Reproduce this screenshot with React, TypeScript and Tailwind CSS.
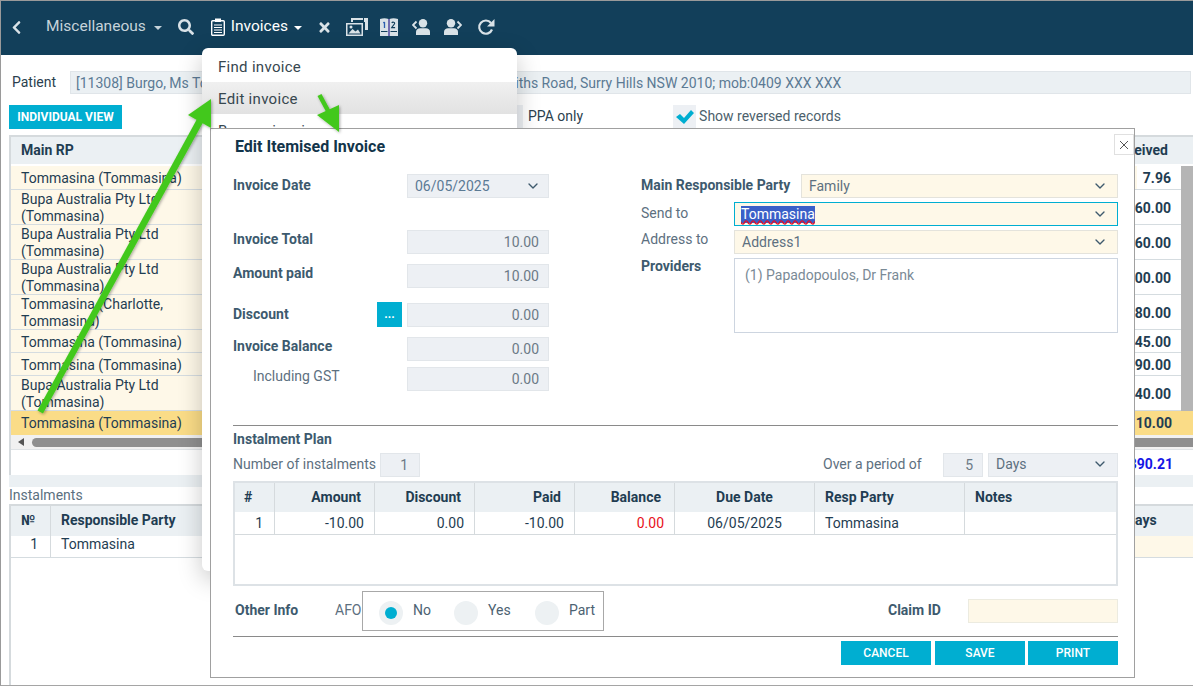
import { FaChevronLeft, FaSearch, FaTimes } from "react-icons/fa";
import { FiChevronDown } from "react-icons/fi";

const mainRows = [
  { name: ["Tommasina (Tommasina)"], value: "7.96", h: "h-[24px]", pt: "pt-[1px]", valuePt: "pt-[1px]" },
  { name: ["Bupa Australia Pty Ltd", "(Tommasina)"], value: "160.00", h: "h-[35px]", pt: "pt-[1px]", valuePt: "pt-[3px]" },
  { name: ["Bupa Australia Pty Ltd", "(Tommasina)"], value: "160.00", h: "h-[35px]", pt: "pt-[1px]", valuePt: "pt-[3px]" },
  { name: ["Bupa Australia Pty Ltd", "(Tommasina)"], value: "100.00", h: "h-[35px]", pt: "pt-[1px]", valuePt: "pt-[3px]" },
  { name: ["Tommasina (Charlotte,", "Tommasina)"], value: "180.00", h: "h-[35px]", pt: "pt-[1px]", valuePt: "pt-[3px]" },
  { name: ["Tommasina (Tommasina)"], value: "145.00", h: "h-[23px]", pt: "pt-[3px]", valuePt: "pt-[3px]" },
  { name: ["Tommasina (Tommasina)"], value: "190.00", h: "h-[23px]", pt: "pt-[3px]", valuePt: "pt-[3px]" },
  { name: ["Bupa Australia Pty Ltd", "(Tommasina)"], value: "140.00", h: "h-[35px]", pt: "pt-[1px]", valuePt: "pt-[3px]" },
];

const planCols = [
  { label: "#", w: "w-[40px]", head: "pl-[9px] text-left", cell: "pr-[11px] text-right", value: "1" },
  { label: "Amount", w: "w-[100px]", head: "pr-[13px] text-right", cell: "pr-[10px] text-right", value: "-10.00" },
  { label: "Discount", w: "w-[100px]", head: "pr-[13px] text-right", cell: "pr-[10px] text-right", value: "0.00" },
  { label: "Paid", w: "w-[100px]", head: "pr-[13px] text-right", cell: "pr-[10px] text-right", value: "-10.00" },
  { label: "Balance", w: "w-[100px]", head: "pr-[13px] text-right", cell: "pr-[10px] text-right text-[#e8101a]", value: "0.00" },
  { label: "Due Date", w: "w-[140px]", head: "text-center", cell: "text-center", value: "06/05/2025" },
  { label: "Resp Party", w: "w-[150px]", head: "pl-[10px] text-left", cell: "pl-[10px] text-left", value: "Tommasina" },
  { label: "Notes", w: "flex-1", head: "pl-[10px] text-left border-r-0", cell: "pl-[10px] border-r-0", value: "" },
];

function ImagesIcon() {
  return (
    <svg width="22" height="18" viewBox="0 0 22 18" fill="#d9e2e7">
      <path d="M5 0h12v2H7v2H5zM18 0h4v12h-3V4h-1zM19.500 1.500h1v1h-1zM19.500 4.500h1v1h-1z" />
      <path d="M0 5h17v13H0zM1.500 6.500v10h14v-10z" fillRule="evenodd" />
      <path d="M2.500 15.500l4-4.500 3 2.500 2.500-2 2.500 4z" />
      <circle cx="5" cy="9" r="1.500" />
    </svg>
  );
}

function BookIcon() {
  return (
    <svg width="18" height="18" viewBox="0 0 18 18">
      <path d="M0 1c3-1 6-1 8.500 0v17H0z" fill="#d9e2e7" />
      <path d="M18 1c-3-1-6-1-8.500 0v17H18z" fill="#d9e2e7" />
      <rect x="8.500" y="1" width="1" height="17" fill="#6a4bc0" />
      <path d="M1 13.500h6.500M10.500 13.500H17" stroke="#123f5a" strokeWidth="1" />
      <path d="M4.500 4v6M3.300 5l1.200-1" stroke="#2a5fb0" strokeWidth="1.300" fill="none" />
      <path d="M11.800 5c.6-1.300 3.200-1 2.800.6-.3 1-2.300 2.400-3 4h3.500" stroke="#123f5a" strokeWidth="1.100" fill="none" />
    </svg>
  );
}

function UserArrowIcon({ flip }: { flip?: boolean }) {
  return (
    <svg width="18" height="16" viewBox="0 0 18 16" fill="#d9e2e7" className={flip ? "-scale-x-100" : ""}>
      <circle cx="11" cy="4.200" r="4.200" />
      <path d="M4 16v-3c0-2.500 2-3.700 4-3.700h6c2 0 4 1.200 4 3.700v3z" />
      <path d="M4.500 2.500L1 6l3.500 3.500" stroke="#d9e2e7" strokeWidth="1.800" fill="none" />
    </svg>
  );
}

function RefreshIcon() {
  return (
    <svg width="18" height="18" viewBox="0 0 18 18" fill="none">
      <path d="M15 11.500A6.600 6.600 0 1 1 14 5" stroke="#d9e2e7" strokeWidth="2.200" />
      <path d="M17.500 1v7.500H10z" fill="#d9e2e7" />
    </svg>
  );
}

function ClipboardIcon() {
  return (
    <svg width="14" height="18" viewBox="0 0 14 18">
      <rect x="0.700" y="2.700" width="12.600" height="14.600" rx="1" fill="none" stroke="#fff" strokeWidth="1.400" />
      <rect x="4" y="0.500" width="6" height="3.500" fill="#fff" />
      <path d="M3 7h8M3 9.500h8M3 12h8M3 14.500h8" stroke="#fff" strokeWidth="1.200" />
    </svg>
  );
}

function Caret({ color }: { color: string }) {
  return <span className={`mt-[1px] w-0 h-0 border-x-[4px] border-x-transparent border-t-[4px] ${color}`} />;
}

function ReadOnly({ value, className = "" }: { value: string; className?: string }) {
  return (
    <div className={`h-[24px] bg-[#edf0f4] border border-[#e2e6ea] text-[#6c7a86] text-right pr-[9px] leading-[22px] ${className}`}>
      {value}
    </div>
  );
}

function Select({ value, className = "" }: { value: string; className?: string }) {
  return (
    <div className={`h-[24px] bg-[#fef8e8] border border-[#e4e3dc] flex items-center justify-between pl-[7px] pr-[9px] text-[#5d7080] ${className}`}>
      <span>{value}</span>
      <FiChevronDown size={16} color="#3f5a6d" />
    </div>
  );
}

function Radio({ label, on, className = "" }: { label: string; on?: boolean; className?: string }) {
  return (
    <div className={`flex items-center ${className}`}>
      <span className="w-[24px] h-[24px] rounded-full bg-[#edf1f3] flex items-center justify-center mt-[3px]">
        {on && <span className="w-[12px] h-[12px] rounded-full bg-[#00aed1]" />}
      </span>
      <span className="ml-[10px] -mt-[2px] text-[#4c6272]">{label}</span>
    </div>
  );
}

export default function App() {
  return (
    <div className="relative w-[1193px] h-[686px] overflow-hidden bg-white [font-family:Roboto,sans-serif] text-[14px] text-[#1f3d52] border-l border-l-[#9a9a9a] border-t border-t-[#9a9a9a] border-b border-b-[#a5a5a5]">
      {/* top bar */}
      <div className="h-[54px] bg-[#123f5a] flex items-center pl-[8px] pb-[2px]">
        <FaChevronLeft size={15} color="#d9e2e7" />
        <span className="ml-[22px] mr-[8px] text-[15.500px] text-[#c6d3da]">Miscellaneous</span>
        <Caret color="border-t-[#c6d3da]" />
        <span className="ml-[16px]"><FaSearch size={16} color="#d9e2e7" /></span>
        <span className="ml-[17px]"><ClipboardIcon /></span>
        <span className="ml-[6px] mr-[6px] text-[15.500px] text-white">Invoices</span>
        <Caret color="border-t-white" />
        <span className="ml-[15px]"><FaTimes size={15} color="#d9e2e7" /></span>
        <span className="ml-[14px]"><ImagesIcon /></span>
        <span className="ml-[12px]"><BookIcon /></span>
        <span className="ml-[14px]"><UserArrowIcon /></span>
        <span className="ml-[14px]"><UserArrowIcon flip /></span>
        <span className="ml-[15px]"><RefreshIcon /></span>
      </div>

      {/* patient line */}
      <div className="flex items-center mt-[16px] pl-[11px]">
        <span className="w-[58px] text-[#2b3f4e]">Patient</span>
        <div className="flex-1 h-[23px] mr-[2px] bg-[#ebf0f3] border border-[#e0e5e9] pl-[5px] leading-[22px] text-[#5b7a94] whitespace-nowrap">
          [11308] Burgo, Ms Tommasina; dob:01/01/1990; 35 yr; Unit 12, 345 Smiths Road, Surry Hills NSW 2010; mob:0409 XXX XXX
        </div>
      </div>

      {/* filter line */}
      <div className="flex items-center mt-[10px] pl-[8px] h-[25px]">
        <div className="w-[113px] h-[24px] bg-[#00aed1] text-white text-[12px] font-bold text-center leading-[24px]">INDIVIDUAL VIEW</div>
        <div className="ml-[395px] w-[6px] h-[24px] bg-[#edf0f4]" />
        <span className="ml-[5px] text-[#2b3f4e]">PPA only</span>
        <span className="ml-[90px] w-[23px] h-[24px] bg-[#edf0f4] flex items-center justify-center">
          <svg width="20" height="16" viewBox="0 0 20 16">
            <path d="M1 8l4-3 4 4 7-8 3 3-10 11z" fill="#00aed1" />
          </svg>
        </span>
        <span className="ml-[3px] text-[#4c5f6c]">Show reversed records</span>
      </div>

      {/* main table */}
      <div className="ml-[8px] mt-[6px] border-l-2 border-l-[#d5dadd] border-t-2 border-t-[#d5dadd]">
        <div className="h-[29px] bg-[#ebf0f3] flex items-center justify-between font-bold pl-[10px] pr-[25px] border-b-2 border-b-[#fff]">
          <span>Main RP</span>
          <span>Received</span>
        </div>
        <div className="flex">
          <div className="flex-1">
            {mainRows.map((row, i) => (
              <div key={i} className={`flex ${row.h} bg-[#fef8e8] border-b border-b-[#d5dce0] items-center justify-between`}>
                <div className={`pl-[10px] ${row.pt} leading-[17px] whitespace-nowrap`}>
                  {row.name.map((line) => (
                    <div key={line}>{line}</div>
                  ))}
                </div>
                <span className={`h-full bg-white pl-[6px] pr-[10px] ${row.valuePt} flex items-center font-bold`}>{row.value}</span>
              </div>
            ))}
          </div>
          <div className="w-[12px] bg-[#b5b5b5]" />
        </div>
        <div className="h-[24px] bg-[#fadc87] flex items-center justify-between pl-[10px]">
          <span>Tommasina (Tommasina)</span>
          <span className="pr-[21px] font-bold">110.00</span>
        </div>
        <div className="h-[14px] flex items-center bg-[#f1f1f1]">
          <span className="ml-[7px] w-0 h-0 border-y-[4px] border-y-transparent border-r-[6px] border-r-[#555]" />
          <span className="ml-[8px] flex-1 h-[9px] rounded-l-full bg-[#8f8f8f]" />
        </div>
        <div className="h-[26px] border-t border-t-[#dfe3e6] text-right pr-[20px] pt-[4px] font-bold text-[#1414e6]">1390.21</div>
      </div>
      <div className="ml-[8px] h-[12px] bg-[#ebf0f3]" />

      {/* instalments behind */}
      <div className="ml-[8px] text-[#5b7080] leading-[17px]">Instalments</div>
      <div className="ml-[8px] border-l-2 border-l-[#d5dadd] border-t-2 border-t-[#d5dadd] h-[181px]">
        <div className="h-[30px] bg-[#ebf0f3] flex items-center font-bold">
          <span className="w-[40px] pl-[10px] border-r border-r-[#d5dadd] h-full leading-[28px]">№</span>
          <span className="pl-[10px] flex-1 -mt-[2px]">Responsible Party</span>
          <span className="w-[67px] -mt-[2px]">Days</span>
        </div>
        <div className="h-[22px] flex border-b border-b-[#d5dce0] leading-[17px]">
          <span className="w-[40px] text-right pr-[12px] border-r border-r-[#d5dadd]">1</span>
          <span className="pl-[10px] flex-1">Tommasina</span>
          <span className="w-[67px] bg-[#fef8e8]" />
        </div>
      </div>

      {/* dropdown menu */}
      <div className="absolute left-[201px] top-[47px] w-[315px] h-[523px] rounded-[6px] bg-white shadow-[0_8px_24px_rgba(0,0,0,0.22)] pt-[2px] text-[15px] tracking-[0.3px] text-[#37474f]">
        <div className="h-[32px] pl-[16px] pt-[1px] leading-[32px]">Find invoice</div>
        <div className="h-[32px] pl-[16px] pt-[1px] leading-[32px] bg-gradient-to-b from-[#f0f0f0] to-[#e2e2e2]">Edit invoice</div>
        <div className="h-[32px] pl-[16px] pt-[1px] leading-[32px]">Bypass invoice</div>
      </div>

      {/* edit invoice dialog */}
      <div className="absolute left-[209px] top-[127px] w-[925px] h-[550px] bg-white border border-[#a0a0a0] pl-[22px] pr-[16px] flex flex-col">
        <button className="absolute right-0 top-[5px] w-[20px] h-[21px] bg-white border border-[#e0e0e0] flex items-center justify-center text-[#555]">
          <svg width="10" height="10" viewBox="0 0 10 10">
            <path d="M1 1l8 8M9 1l-8 8" stroke="#555" strokeWidth="1" />
          </svg>
        </button>

        <h2 className="ml-[2px] mt-[8px] h-[19px] text-[16px] leading-[19px] font-bold text-[#12344a]">Edit Itemised Invoice</h2>

        <div className="mt-[18px] flex">
          <div className="w-[316px] font-bold text-[#3d5a6e]">
            <div className="flex items-start justify-between">
              <span className="mt-[1px]">Invoice Date</span>
              <div className="w-[142px] h-[24px] bg-[#edf0f4] border border-[#e2e6ea] flex items-center justify-between pl-[7px] pr-[7px] font-normal text-[#5b7a94]">
                <span>06/05/2025</span>
                <FiChevronDown size={16} color="#3f5a6d" />
              </div>
            </div>
            <div className="mt-[32px] flex items-start justify-between">
              <span className="-mt-[1px]">Invoice Total</span>
              <ReadOnly value="10.00" className="w-[142px] font-normal" />
            </div>
            <div className="mt-[10px] flex items-start justify-between">
              <span className="-mt-[1px]">Amount paid</span>
              <ReadOnly value="10.00" className="w-[142px] font-normal" />
            </div>
            <div className="mt-[15px] flex items-start">
              <span className="w-[144px] mt-[1px]">Discount</span>
              <span className="-mt-[1px] w-[25px] h-[25px] bg-[#00aed1] text-white text-center text-[12px] leading-[24px]">...</span>
              <ReadOnly value="0.00" className="ml-[5px] w-[142px] font-normal" />
            </div>
            <div className="mt-[10px] flex items-start justify-between">
              <span className="-mt-[1px]">Invoice Balance</span>
              <ReadOnly value="0.00" className="w-[142px] font-normal" />
            </div>
            <div className="mt-[6px] flex items-start justify-between font-normal">
              <span className="pl-[20px] -mt-[1px] text-[#5d7080]">Including GST</span>
              <ReadOnly value="0.00" className="w-[142px]" />
            </div>
          </div>

          <div className="ml-[92px] w-[477px] flex flex-col gap-[4px]">
            <div className="flex items-center">
              <span className="w-[160px] -mt-[2px] font-bold text-[#3d5a6e]">Main Responsible Party</span>
              <Select value="Family" className="w-[317px]" />
            </div>
            <div className="flex items-center">
              <span className="w-[93px] -mt-[2px] text-[#5d7080]">Send to</span>
              <div className="w-[384px] h-[24px] bg-[#fef8e8] border border-[#00aed1] flex items-center justify-between pl-[6px] pr-[9px]">
                <span className="bg-[#3a5fc8] text-white underline decoration-wavy decoration-[#d81030] leading-[17px]">Tommasina</span>
                <FiChevronDown size={16} color="#3f5a6d" />
              </div>
            </div>
            <div className="flex items-center">
              <span className="w-[93px] -mt-[6px] text-[#5d7080]">Address to</span>
              <Select value="Address1" className="w-[384px]" />
            </div>
            <div className="flex items-start">
              <span className="w-[93px] -mt-[2px] font-bold text-[#3d5a6e]">Providers</span>
              <div className="w-[384px] h-[75px] border border-[#cdd5e0] pl-[10px] pt-[6px] text-[#7a8a96]">(1) Papadopoulos, Dr Frank</div>
            </div>
          </div>
        </div>

        <div className="mt-[34px] border-t border-t-[#8a8a8a] w-[885px]" />
        <div className="mt-[5px] h-[17px] leading-[17px] font-bold text-[#3d5a6e]">Instalment Plan</div>

        <div className="mt-[5px] w-[885px] flex items-center text-[#5d7080]">
          <span className="w-[147px] -mt-[2px]">Number of instalments</span>
          <ReadOnly value="1" className="w-[40px] pr-[11px]" />
          <span className="ml-[403px] w-[120px] -mt-[2px]">Over a period of</span>
          <ReadOnly value="5" className="w-[40px]" />
          <div className="ml-[5px] w-[130px] h-[24px] bg-[#edf0f4] border border-[#e2e6ea] flex items-center justify-between pl-[7px] pr-[9px] pb-[2px]">
            <span>Days</span>
            <FiChevronDown size={16} color="#3f5a6d" />
          </div>
        </div>

        <div className="mt-[4px] w-[885px] h-[105px] border-2 border-[#dde2e6] text-[#1f3d52]">
          <div className="flex h-[29px] bg-[#ebf0f3] font-bold">
            {planCols.map((c) => (
              <div key={c.label} className={`${c.w} ${c.head} border-r border-r-[#d5dadd] leading-[29px]`}>{c.label}</div>
            ))}
          </div>
          <div className="flex h-[23px] border-b border-b-[#d5dadd]">
            {planCols.map((c) => (
              <div key={c.label} className={`${c.w} ${c.cell} border-r border-r-[#d5dadd] leading-[22px]`}>{c.value}</div>
            ))}
          </div>
        </div>

        <div className="mt-[5px] w-[885px] flex items-center">
          <span className="ml-[2px] w-[100px] -mt-[2px] font-bold text-[#3d5a6e]">Other Info</span>
          <span className="w-[27px] -mt-[2px] text-[#5d7080]">AFO</span>
          <div className="w-[242px] h-[40px] border border-[#a8a8a8] flex items-center pl-[16px]">
            <Radio label="No" on className="w-[75px]" />
            <Radio label="Yes" className="w-[81px]" />
            <Radio label="Part" />
          </div>
          <span className="ml-[284px] w-[80px] -mt-[2px] font-bold text-[#3d5a6e]">Claim ID</span>
          <div className="w-[150px] h-[24px] bg-[#fef8e8] border border-[#ecebe0]" />
        </div>

        <div className="mt-[5px] border-t border-t-[#8a8a8a] w-[885px]" />
        <div className="mt-[4px] w-[885px] flex justify-end text-[12px] font-medium text-white">
          <button className="w-[90px] h-[24px] bg-[#00aed1]">CANCEL</button>
          <button className="ml-[4px] w-[90px] h-[24px] bg-[#00aed1]">SAVE</button>
          <button className="ml-[3px] w-[90px] h-[24px] bg-[#00aed1]">PRINT</button>
        </div>
      </div>

      {/* green call-out arrows */}
      <svg className="absolute left-[-1px] top-[-1px] pointer-events-none" width="1193" height="686" viewBox="0 0 1193 686">
        <defs>
          <filter id="arrowShadow" x="-20%" y="-20%" width="140%" height="140%">
            <feDropShadow dx="1" dy="1" stdDeviation="1.500" floodColor="#000" floodOpacity="0.35" />
          </filter>
        </defs>
        <g fill="#43c81c" filter="url(#arrowShadow)">
          <path d="M37.500 410.500L197 119l6 3.500L43 413.500z" />
          <path d="M211 99L188 115l23 13z" />
          <path d="M317.500 96l4-2 13 24-4 2z" />
          <path d="M339 132L317 115l22-10z" />
        </g>
      </svg>
    </div>
  );
}
